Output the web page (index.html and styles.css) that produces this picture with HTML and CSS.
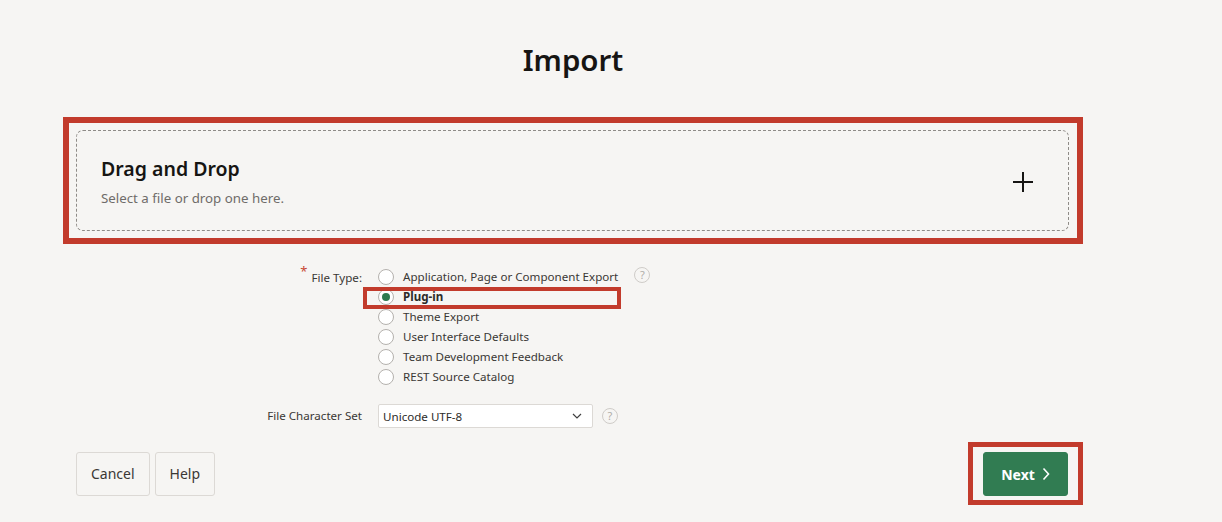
FILE: index.html
```html
<!DOCTYPE html>
<html lang="en">
<head>
<meta charset="utf-8">
<title>Import</title>
<link rel="stylesheet" href="styles.css">
</head>
<body>
<main class="page">
  <h1 class="title">Import</h1>

  <div class="callout callout-drop">
    <div class="dropzone">
      <div class="dropzone-text">
        <h2 class="dropzone-heading">Drag and Drop</h2>
        <p class="dropzone-hint">Select a file or drop one here.</p>
      </div>
      <svg class="plus" width="22" height="22" viewBox="0 0 22 22" aria-hidden="true">
        <path d="M11 1v20M1 11h20" stroke="#161513" stroke-width="2" fill="none"/>
      </svg>
    </div>
  </div>

  <div class="form">
    <div class="field-label field-label-required"><span class="req">*</span>File Type:</div>
    <div class="field-value field-radios">
      <ul class="radio-list">
        <li class="radio-row"><span class="radio"></span><span class="radio-text">Application, Page or Component Export</span></li>
        <li class="radio-row is-selected"><span class="radio radio-on"></span><span class="radio-text">Plug-in</span></li>
        <li class="radio-row"><span class="radio"></span><span class="radio-text">Theme Export</span></li>
        <li class="radio-row"><span class="radio"></span><span class="radio-text">User Interface Defaults</span></li>
        <li class="radio-row"><span class="radio"></span><span class="radio-text">Team Development Feedback</span></li>
        <li class="radio-row"><span class="radio"></span><span class="radio-text">REST Source Catalog</span></li>
      </ul>
      <span class="help help-radios">?</span>
    </div>

    <div class="field-label field-label-select">File Character Set</div>
    <div class="field-value field-select">
      <div class="select">
        <span>Unicode UTF-8</span>
        <svg class="chev" width="10" height="6" viewBox="0 0 10 6" aria-hidden="true">
          <path d="M1 1l4 4 4-4" stroke="#404040" stroke-width="1.2" fill="none"/>
        </svg>
      </div>
      <span class="help help-select">?</span>
    </div>
  </div>

  <div class="actions">
    <div class="actions-left">
      <button class="btn">Cancel</button>
      <button class="btn">Help</button>
    </div>
    <div class="callout callout-next">
      <button class="btn btn-primary">Next
        <svg width="8" height="14" viewBox="0 0 8 14" aria-hidden="true">
          <path d="M1.5 1.5l5 5.5-5 5.5" stroke="#ffffff" stroke-width="1.6" fill="none"/>
        </svg>
      </button>
    </div>
  </div>
</main>
</body>
</html>
```

FILE: styles.css
```css
*, *::before, *::after { box-sizing: border-box; }

html, body {
  margin: 0;
  padding: 0;
  background: #f6f5f3;
  font-family: "Noto Sans", "Open Sans", sans-serif;
  color: #161513;
}

.page {
  width: 1020px;
  margin-left: 63px;
  padding-top: 38px;
}

.title {
  margin: 0;
  text-align: center;
  font-size: 29.5px;
  line-height: 44px;
  font-weight: 600;
  color: #161513;
}

.callout {
  border: 6px solid #c23b2c;
}

.callout-drop {
  margin-top: 35px;
  padding: 7px 8px 7px 7px;
}

.dropzone {
  height: 101px;
  border: 1px dashed #8e8b87;
  border-radius: 7px;
  display: flex;
  align-items: center;
  justify-content: space-between;
  padding: 0 34px 0 24px;
}

.dropzone-text {
  padding-top: 2px;
}

.dropzone-heading {
  margin: 0;
  font-size: 19.5px;
  line-height: 24px;
  font-weight: 600;
  color: #161513;
}

.dropzone-hint {
  margin: 8px 0 0;
  font-size: 13.3px;
  line-height: 18px;
  color: #6f6c69;
}

.plus {
  display: block;
  margin-top: 2px;
}

.form {
  display: grid;
  grid-template-columns: 299px 1fr;
  column-gap: 16px;
  row-gap: 17px;
  margin-top: 23px;
  font-size: 11.6px;
  color: #3a3835;
}

.field-label {
  text-align: right;
  line-height: 20px;
}

.req {
  color: #c74634;
  font-size: 13px;
  position: relative;
  top: -6px;
  margin-right: 4px;
}

.field-radios {
  display: flex;
  align-items: flex-start;
}

.radio-list {
  list-style: none;
  margin: 0;
  padding: 0;
}

.radio-row {
  position: relative;
  display: flex;
  align-items: center;
  height: 20px;
  line-height: 20px;
}

.radio {
  width: 16px;
  height: 16px;
  border: 1px solid #b4b1ad;
  border-radius: 50%;
  background: #ffffff;
  margin-right: 9px;
  display: flex;
  align-items: center;
  justify-content: center;
  flex: none;
}

.radio-on::after {
  content: "";
  width: 8px;
  height: 8px;
  border-radius: 50%;
  background: #2e7a4f;
}

.is-selected .radio-text {
  font-weight: 700;
  color: #2d2b28;
}

.is-selected::after {
  content: "";
  position: absolute;
  left: -15px;
  top: 0;
  width: 258px;
  height: 22px;
  border: 4px solid #c23b2c;
}

.help {
  width: 16px;
  height: 16px;
  border: 1px solid #cfccc8;
  border-radius: 50%;
  color: #b0ada9;
  font-size: 11px;
  line-height: 14px;
  text-align: center;
  flex: none;
}

.help-radios {
  margin-left: 16px;
  margin-top: 0;
}

.field-label-select {
  line-height: 23px;
}

.field-select {
  display: flex;
  align-items: center;
}

.select {
  width: 215px;
  height: 24px;
  background: #ffffff;
  border: 1px solid #dcd9d5;
  border-radius: 2px;
  display: flex;
  align-items: center;
  justify-content: space-between;
  padding: 0 10px 0 4px;
  color: #2d2b28;
}

.chev { display: block; }

.help-select {
  margin-left: 9px;
}

.actions {
  display: flex;
  align-items: center;
  justify-content: space-between;
  margin-top: 14px;
}

.actions-left {
  display: flex;
  gap: 5px;
  margin-left: 13px;
}

.btn {
  height: 44px;
  padding: 0 14px;
  font-family: inherit;
  font-size: 14px;
  color: #3a3835;
  background: #f6f5f3;
  border: 1px solid #dcd9d5;
  border-radius: 3px;
}

.callout-next {
  border-width: 5px;
  padding: 5px 10px 4px;
}

.btn-primary {
  width: 85px;
  background: #317c52;
  border-color: #317c52;
  color: #ffffff;
  font-weight: 700;
  display: flex;
  align-items: center;
  justify-content: center;
  gap: 7px;
}

.btn-primary svg { display: block; }
```
